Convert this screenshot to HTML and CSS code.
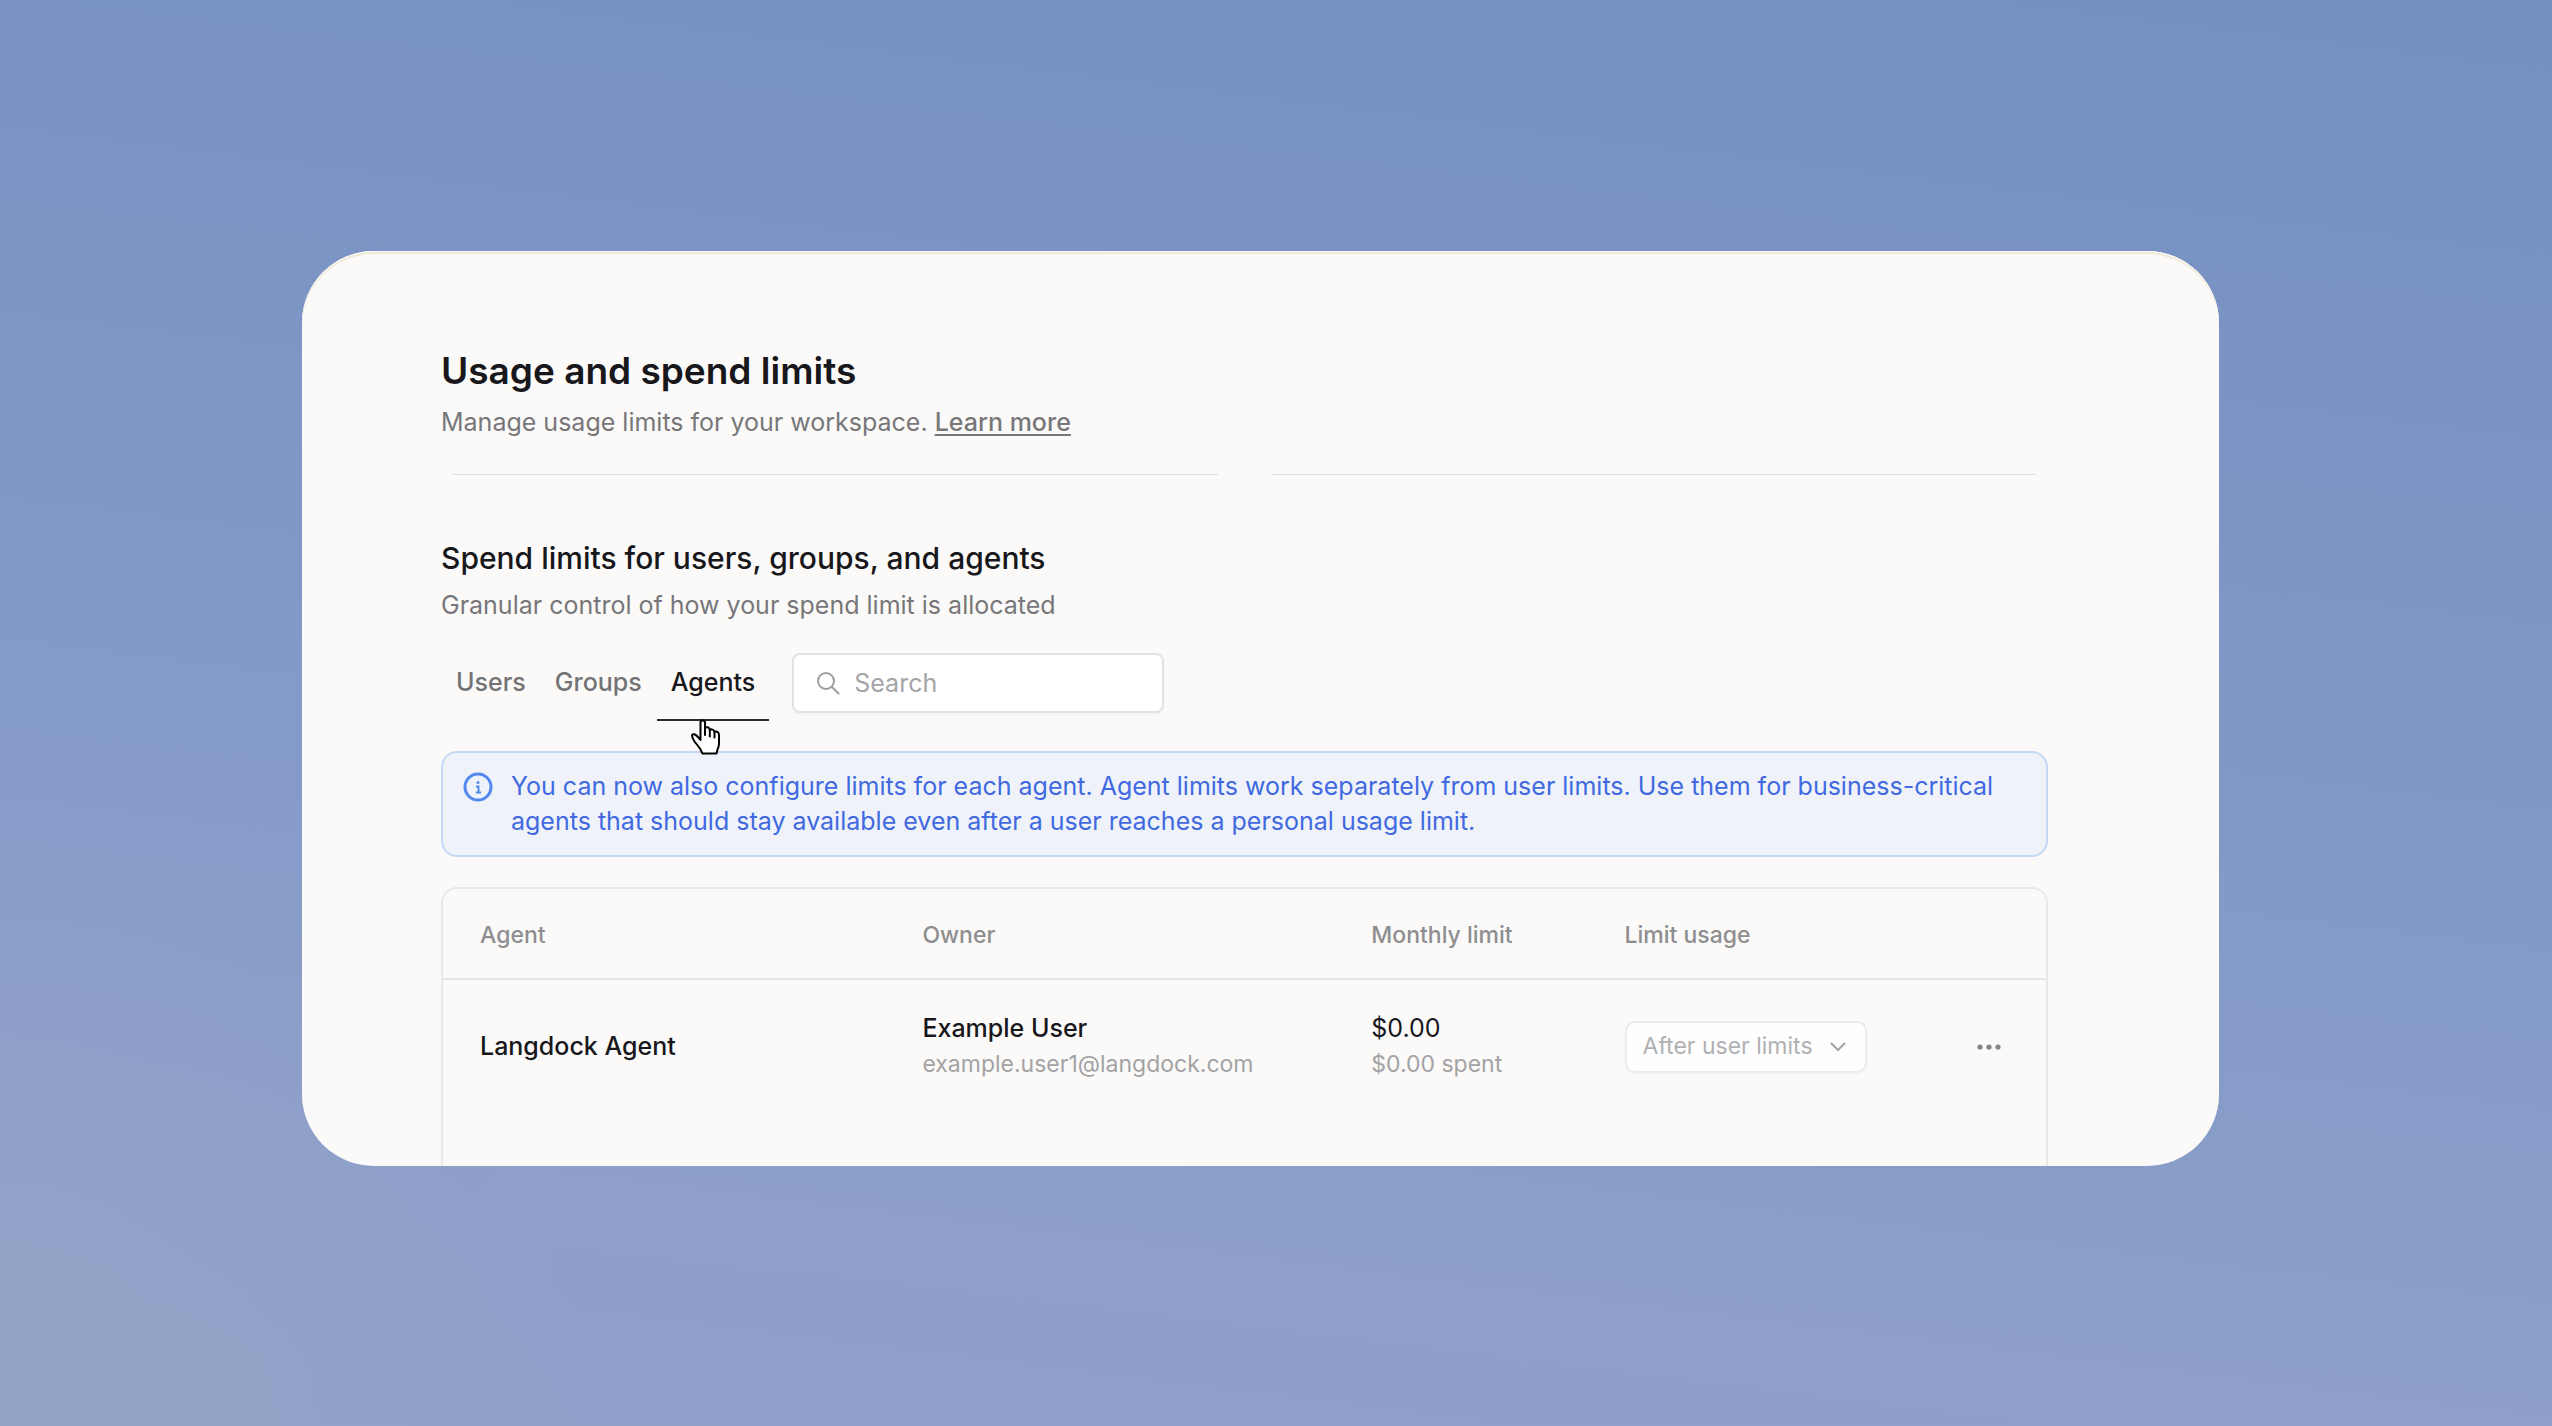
FILE: index.html
```html
<!DOCTYPE html>
<html lang="en">
	<head>
		<meta charset="UTF-8">
		<meta name="viewport" content="width=device-width, initial-scale=1.0">
		<title>Usage and spend limits</title>
		<link rel="stylesheet" href="styles.css">
	</head>
	<body>
		<main class="card">
			<header class="page-header">
				<h1>Usage and spend limits</h1>
				<p class="hint">Manage usage limits for your workspace. <a href="#">Learn more</a></p>
			</header>
			<div class="dividers">
				<hr>
				<hr>
			</div>
			<section class="limits">
				<h2>Spend limits for users, groups, and agents</h2>
				<p class="hint">Granular control of how your spend limit is allocated</p>
				<div class="toolbar">
					<nav class="tabs">
						<button type="button" class="tab">Users</button>
						<button type="button" class="tab">Groups</button>
						<button type="button" class="tab active">Agents
							<svg class="pointer" viewBox="0 0 30 36" width="30" height="36" aria-hidden="true">
								<path d="M9.5 3.5Q9.5 1.5 11.8 1.5Q14 1.5 14 3.5V9Q15 8 16.5 8.3Q18.6 8.7 18.8 11Q20 10 21.6 10.6Q23.3 11.3 23.5 13Q24.5 12.2 26 12.8Q28 13.6 28 16V25Q27.8 28 26.5 30.5L25.5 34.5H11.5L9 29.5L3.5 22.5Q1 18.5 1 16.5Q1.5 14.5 4 15.5Q6 16.5 9.5 21Z"/>
								<path d="M14 9V16M18.8 11V17.5M23.5 13V18.5"/>
							</svg>
						</button>
					</nav>
					<label class="search">
						<svg viewBox="0 0 24 24" width="24" height="24" aria-hidden="true">
							<circle cx="10" cy="10" r="8"/>
							<path d="M16 16L22.5 22.5"/>
						</svg>
						<input type="text" placeholder="Search" aria-label="Search">
					</label>
				</div>
				<div class="notice">
					<svg viewBox="0 0 30 30" width="30" height="30" aria-hidden="true">
						<circle cx="15" cy="15" r="13"/>
						<path d="M13 14.5H15.5V20.5M13 20.5H18"/>
						<circle class="dot" cx="15" cy="10.5" r="1.5"/>
					</svg>
					<p>You can now also configure limits for each agent. Agent limits work separately from user limits. Use them for business-critical agents that should stay available even after a user reaches a personal usage limit.</p>
				</div>
				<div class="table-box">
					<table>
						<thead>
							<tr>
								<th class="col-agent">Agent</th>
								<th class="col-owner">Owner</th>
								<th class="col-limit">Monthly limit</th>
								<th>Limit usage</th>
								<td class="col-actions"></td>
							</tr>
						</thead>
						<tbody>
							<tr>
								<td class="strong">Langdock Agent</td>
								<td>
									<div class="strong">Example User</div>
									<div class="muted">example.user1@langdock.com</div>
								</td>
								<td>
									<div>$0.00</div>
									<div class="muted">$0.00 spent</div>
								</td>
								<td>
									<div class="select">
										<select aria-label="Limit usage" disabled>
											<option>After user limits</option>
										</select>
										<svg viewBox="0 0 16 10" width="16" height="10" aria-hidden="true">
											<path d="M1.5 1.5L8 8L14.5 1.5"/>
										</svg>
									</div>
								</td>
								<td class="col-actions">
									<button type="button" class="more" aria-label="More actions">
										<svg viewBox="0 0 24 6" width="24" height="6" aria-hidden="true">
											<circle cx="3" cy="3" r="2.6"/>
											<circle cx="12" cy="3" r="2.6"/>
											<circle cx="21" cy="3" r="2.6"/>
										</svg>
									</button>
								</td>
							</tr>
						</tbody>
					</table>
				</div>
			</section>
		</main>
	</body>
</html>
```
FILE: styles.css
```css
* {
	box-sizing: border-box;
}
body {
	margin: 0;
	min-height: 100vh;
	padding: 251px 333px 0 302px;
	background:
		radial-gradient(circle at 0 100%, #97a5c4a0, #97a5c400 20%),
		linear-gradient(187deg, #758fc3 0%, #8098c6 45%, #8d9fca 82%, #8fa1c9 100%);
	font-family: Inter, "Liberation Sans", sans-serif;
	font-size: 25px;
	line-height: 35px;
	color: #17171c;
}
h1, h2, p {
	margin: 0;
}
button, input, select {
	font: inherit;
	color: inherit;
}
.card {
	background: #fbfaf8;
	border-radius: 72px;
	padding: 96px 171px 0 139px;
	box-shadow: inset 0 1px #fcfbf9, inset 0 3px #f0eadc;
	overflow: hidden;
}
h1 {
	font-size: 37px;
	font-weight: 600;
	line-height: 48px;
}
.hint {
	color: #77777a;
}
.page-header .hint {
	margin-top: 10px;
}
.hint a {
	color: inherit;
	font-weight: 500;
	text-underline-offset: 3px;
}
.dividers {
	display: flex;
	gap: 54px;
	padding: 0 12px;
	margin-top: 34px;
}
.dividers hr {
	flex: 1;
	margin: 0;
	border: 0;
	border-top: 1px solid #dededf;
}
h2 {
	font-size: 30px;
	font-weight: 500;
	line-height: 40px;
}
.limits {
	margin-top: 63px;
}
.limits .hint {
	margin-top: 10px;
}
.toolbar {
	display: flex;
	align-items: flex-start;
	gap: 23px;
	margin-top: 30px;
}
.tabs {
	display: flex;
	gap: 1px;
	padding-left: 1px;
}
.tab {
	position: relative;
	height: 68px;
	padding: 0 14px 8px;
	border: 0;
	border-bottom: 2px solid transparent;
	background: none;
	color: #737376;
	font-weight: 500;
}
.tab.active {
	color: #17171c;
	border-bottom-color: #2b2b2b;
}
.pointer {
	position: absolute;
	top: 66px;
	left: 34px;
	z-index: 1;
	fill: #fff;
	stroke: #000;
	stroke-width: 2;
	stroke-linejoin: round;
	stroke-linecap: round;
}
.search {
	display: flex;
	align-items: center;
	gap: 14px;
	width: 372px;
	height: 60px;
	padding: 0 22px;
	background: #fff;
	border: 2px solid #e2e2e1;
	border-radius: 8px;
	box-shadow: 0 2px 3px #00000008;
}
.search svg {
	flex: none;
	fill: none;
	stroke: #9d9da0;
	stroke-width: 2;
	stroke-linecap: round;
}
.search input {
	width: 100%;
	padding: 0;
	border: 0;
	outline: none;
	background: none;
}
.search input::placeholder {
	color: #a5a5a7;
}
.notice {
	display: flex;
	gap: 18px;
	margin-top: 30px;
	padding: 16px 40px 16px 20px;
	background: #eff3f9;
	border: 2px solid #c3d8f6;
	border-radius: 16px;
	color: #4169e1;
}
.notice svg {
	flex: none;
	margin-top: 3px;
	fill: none;
	stroke: #5288f0;
	stroke-width: 3;
}
.notice path {
	stroke-width: 2;
}
.notice .dot {
	fill: #5288f0;
	stroke: none;
}
.table-box {
	margin-top: 30px;
	border: 2px solid #e9e9e7;
	border-bottom: 0;
	border-radius: 16px 16px 0 0;
}
table {
	width: 100%;
	table-layout: fixed;
	border-collapse: collapse;
}
th, td {
	padding: 0 0 0 37px;
	text-align: left;
}
thead tr {
	height: 90px;
	border-bottom: 2px solid #e5e5e4;
}
th {
	padding-top: 4px;
	font-size: 23px;
	font-weight: 500;
	color: #8e8e90;
}
tbody td {
	padding-top: 31px;
	padding-bottom: 84px;
}
.col-agent {
	width: 27.6%;
}
.col-owner {
	width: 28%;
}
.col-limit {
	width: 15.8%;
}
.col-actions {
	width: 10%;
	padding-right: 37px;
	text-align: right;
}
.strong {
	font-weight: 500;
}
.muted {
	margin-top: 1px;
	font-size: 23px;
	color: #a3a3a5;
}
.select {
	position: relative;
	width: 242px;
}
.select select {
	display: block;
	width: 100%;
	height: 52px;
	padding: 0 16px;
	appearance: none;
	background: #fefefe;
	border: 2px solid #ececea;
	border-radius: 10px;
	box-shadow: 0 1px 3px #00000008;
	font-size: 23px;
	color: #b0b0b2;
	opacity: 1;
}
.select svg {
	position: absolute;
	top: 21px;
	right: 21px;
	fill: none;
	stroke: #a3a3a5;
	stroke-width: 2;
	stroke-linecap: round;
	stroke-linejoin: round;
}
.more {
	display: block;
	margin-left: auto;
	padding: 8px;
	border: 0;
	background: none;
}
.more svg {
	display: block;
	fill: #858588;
}
```
